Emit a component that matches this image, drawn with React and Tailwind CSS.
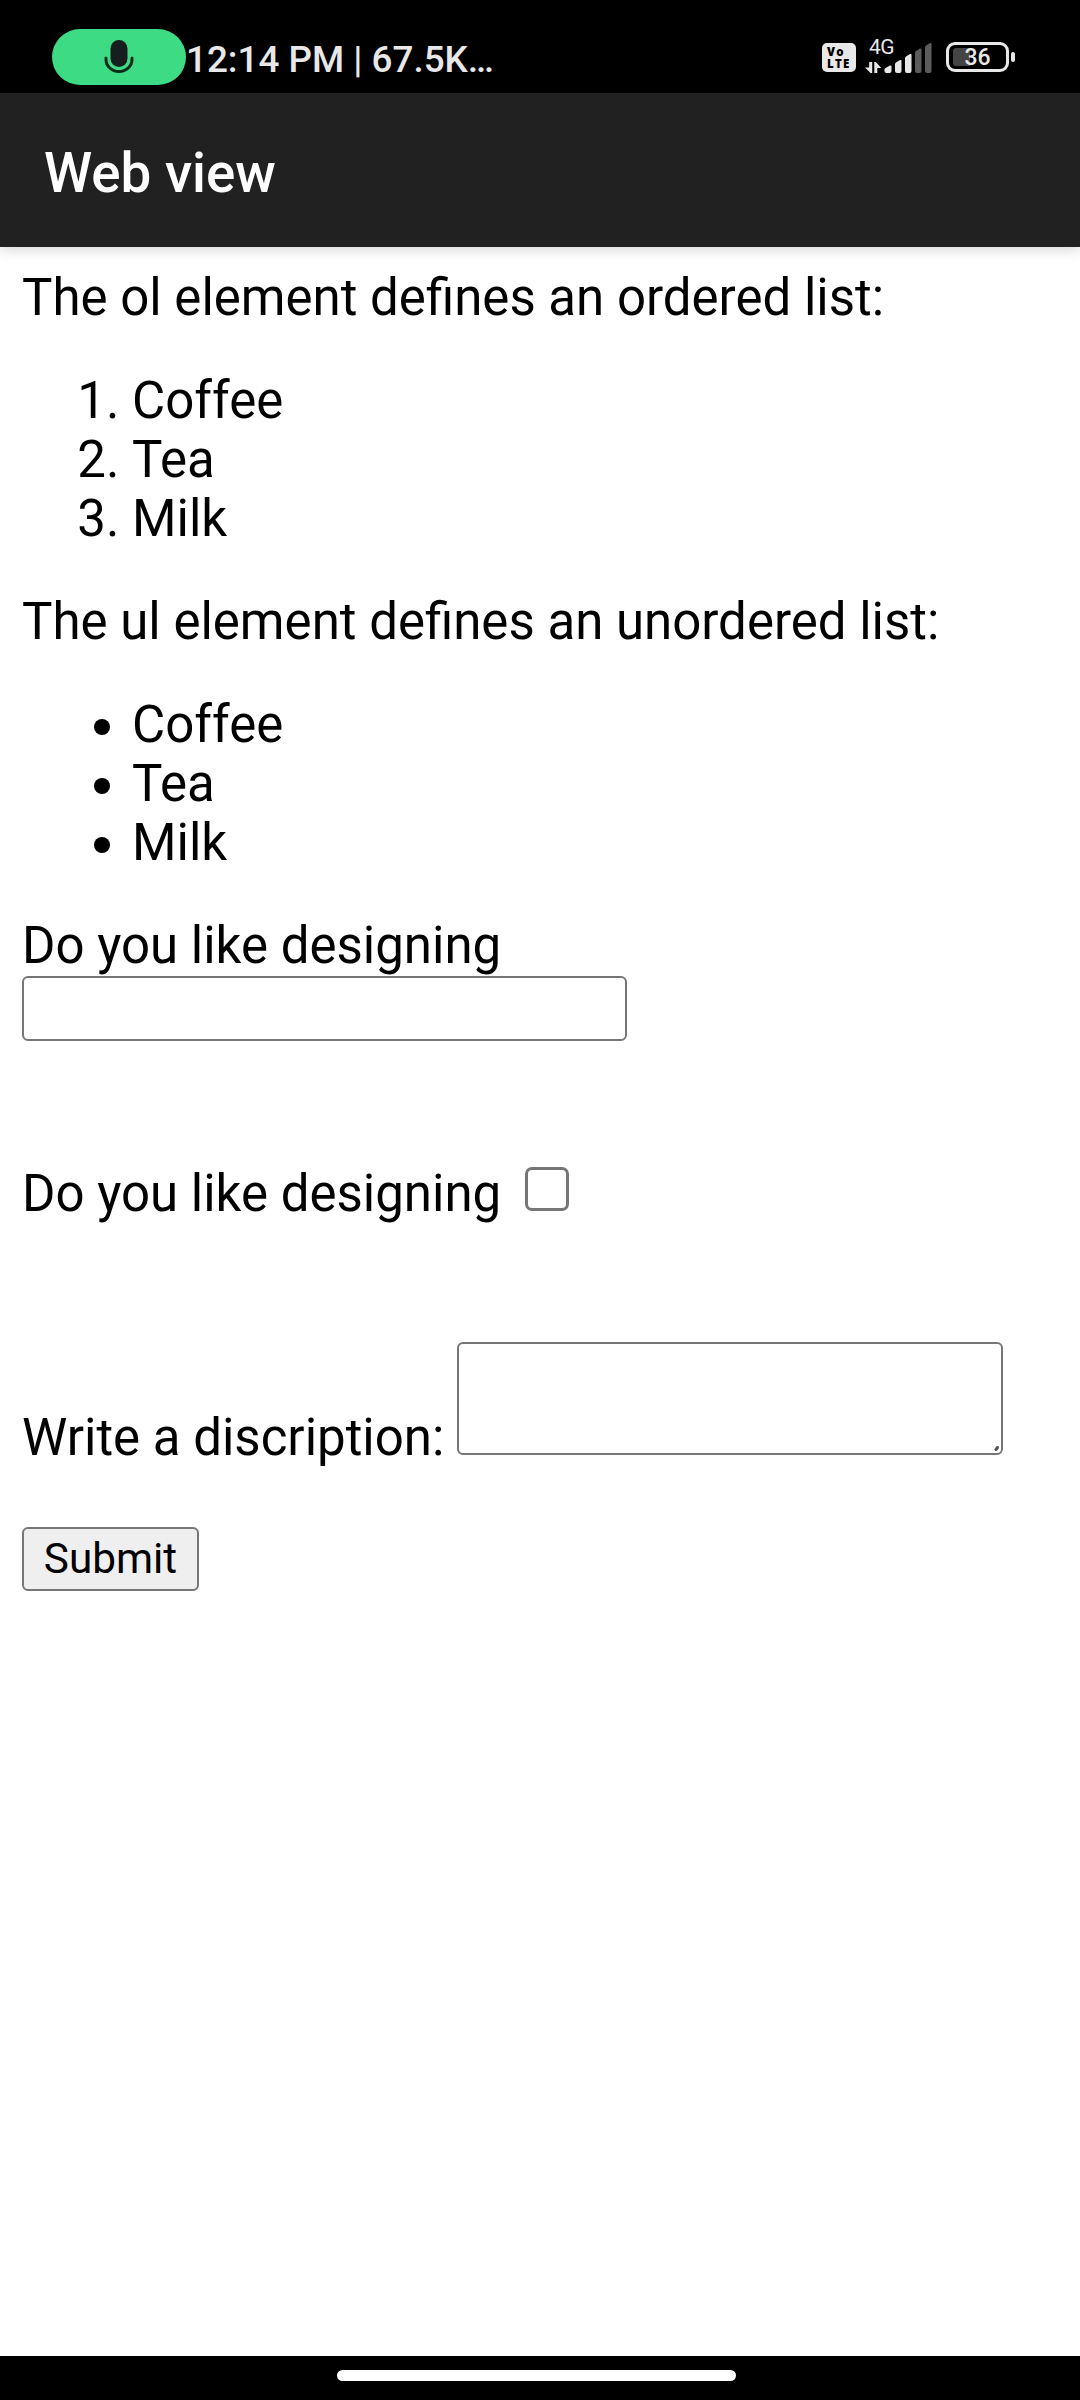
import React from "react";

function MicIcon() {
  return (
    <svg width="30" height="36" viewBox="0 0 30 36" fill="none">
      <rect x="6.500" y="1" width="17" height="27" rx="8.500" fill="#161f1e" />
      <path d="M2 19v1.500a13 12 0 0 0 26 0V19" stroke="#0d2c1c" strokeWidth="3" strokeLinecap="round" />
    </svg>
  );
}

function SignalIcon() {
  return (
    <svg width="68" height="34" viewBox="0 0 68 34" fill="#e8e8e8">
      <path d="M4.200 20h3v11H5.500L0 25.500h4.200z" />
      <path d="M9.300 20h1.500L16.300 26h-4v5H9.300z" />
      <path d="M19.500 27.500q0-1 1-1.600l4.500-2.300q1.500-.6 1.500 1V29q0 2-2 2h-3q-2 0-2-2z" />
      <path d="M30 22q0-1 1-1.600l4-2.300q1.500-.6 1.500 1V29q0 2-2 2h-2.500q-2 0-2-2z" />
      <path d="M40 16q0-1 1-1.600l4-2.300q1.500-.6 1.500 1V29q0 2-2 2h-2.500q-2 0-2-2z" />
      <path fill="#5c5c5c" d="M50 10.500q0-1 1-1.600l4-2.300q1.500-.6 1.500 1V29q0 2-2 2h-2.500q-2 0-2-2z" />
      <path fill="#5c5c5c" d="M60 5q0-1 1-1.600l4-2.300q1.500-.6 1.500 1V29q0 2-2 2h-2.500q-2 0-2-2z" />
    </svg>
  );
}

function StatusBar() {
  return (
    <div className="flex h-[93px] items-start justify-between bg-black pt-[29px] pl-[52px] pr-[65px] text-[#e8e8e8]">
      <div className="flex h-[56px] items-center">
        <div className="flex h-[56px] w-[134px] items-center justify-center rounded-full bg-[#3ddc84]">
          <MicIcon />
        </div>
        <div className="pt-[6px] text-[36.8px] leading-[50px] font-medium whitespace-nowrap">12:14 PM | 67.5K…</div>
      </div>
      <div className="flex items-start pt-[13px]">
        <div className="mt-px flex h-[29px] w-[34px] flex-col rounded-[5px] bg-[#e8e8e8] pt-[3px] pl-[5px] font-['Open_Sans'] text-[11.5px] font-extrabold tracking-[1.3px] text-black">
          <span className="h-[12px] leading-[12px]">Vo</span>
          <span className="h-[12px] leading-[12px]">LTE</span>
        </div>
        <div className="relative ml-[9px]">
          <SignalIcon />
          <span className="absolute -top-[7px] left-[4px] text-[21px] leading-[24px] tracking-[-0.5px]">4G</span>
        </div>
        <div className="ml-[13px] flex items-center">
          <div className="relative flex h-[30px] w-[63px] items-center justify-center rounded-[9px] border-[3px] border-[#e8e8e8]">
            <div className="absolute left-[4px] h-[18px] w-[17px] rounded-l-[3px] bg-[#444]" />
            <span className="relative pt-[2px] text-[23px] leading-[24px] font-medium">36</span>
          </div>
          <div className="ml-[2px] h-[10px] w-[4px] rounded-[2px] bg-[#e8e8e8]" />
        </div>
      </div>
    </div>
  );
}

export default function App() {
  return (
    <div className="flex h-[2400px] w-[1080px] flex-col overflow-hidden bg-white font-[Roboto,sans-serif]">
      <StatusBar />
      <header className="z-10 flex h-[154px] items-center bg-[#212121] pl-[44px] pt-[6px] text-[54.7px] font-medium text-white shadow-[0_3px_12px_rgba(0,0,0,0.16)]">
        Web view
      </header>
      <main className="flex-1 px-[22px] pt-[21px] text-[51px] leading-[59px] text-black">
        <p>The ol element defines an ordered list:</p>
        <ol className="my-[44px] list-decimal pl-[110px]">
          <li>Coffee</li>
          <li>Tea</li>
          <li>Milk</li>
        </ol>
        <p>The ul element defines an unordered list:</p>
        <ul className="my-[44px] list-disc pl-[110px]">
          <li>Coffee</li>
          <li>Tea</li>
          <li>Milk</li>
        </ul>
        <form>
          <label className="block">
            Do you like designing
            <input type="text" className="mt-px block h-[65px] w-[605px] rounded-[6px] border-2 border-[#767676] bg-white" />
          </label>
          <label className="mt-[123px] flex">
            Do you like designing
            <input type="checkbox" className="mt-[3px] ml-[24px] size-[44px] appearance-none rounded-[7px] border-[3px] border-[#767676] bg-white" />
          </label>
          <div className="mt-[119px] flex items-end">
            <label className="w-[435px] whitespace-nowrap">Write a discription:</label>
            <div className="relative mb-[12px] h-[113px]">
              <textarea className="block h-[113px] w-[546px] resize-none rounded-[6px] border-2 border-[#767676] bg-white" />
              <svg className="absolute right-[3px] bottom-[3px]" width="6" height="6" viewBox="0 0 6 6">
                <path d="M2 3.500l1.500-2" stroke="#555" strokeWidth="3" strokeLinecap="round" />
              </svg>
            </div>
          </div>
          <button type="button" className="mt-[60px] block h-[64px] w-[177px] rounded-[6px] border-2 border-[#767676] bg-[#efefef] text-[42.3px] leading-[50px]">
            Submit
          </button>
        </form>
      </main>
      <div className="flex h-[44px] justify-center bg-black pt-[14px] pr-[7px]">
        <div className="h-[11px] w-[399px] rounded-full bg-white" />
      </div>
    </div>
  );
}
